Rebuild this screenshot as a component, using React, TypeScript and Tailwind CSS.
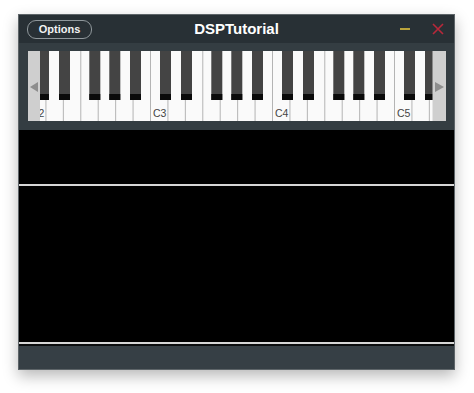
import React from 'react';

const WHITE_W = 122 / 7;
const BLACK_OFFSETS = [10, 31, 61.3, 81.3, 102];
const KB_W = 418;
const KB_H = 70;

const Keyboard = () => {
  const whites = Array.from({ length: 25 }, (_, i) => i);
  const octaves = [0, 1, 2, 3];
  return (
    <svg width={KB_W} height={KB_H} viewBox={`0 0 ${KB_W} ${KB_H}`} className="block">
      <rect x="0" y="0" width={KB_W} height={KB_H} fill="#fafafa" />
      {whites.map((i) => (
        <line
          key={i}
          x1={i * WHITE_W + 0.5}
          y1="0"
          x2={i * WHITE_W + 0.5}
          y2={KB_H}
          stroke="#b4b4b4"
          strokeWidth="1"
        />
      ))}
      {octaves.map((o) =>
        BLACK_OFFSETS.map((b) => {
          const x = o * 122 + b;
          return (
            <g key={`${o}-${b}`}>
              <rect x={x} y="0" width="11" height="49" fill="#444444" />
              <rect x={x} y="43" width="11" height="6" fill="#0a0a0a" />
            </g>
          );
        })
      )}
      {['C2', 'C3', 'C4', 'C5'].map((label, o) => (
        <text
          key={label}
          x={o * 122 + 3}
          y="66"
          fontSize="10.5"
          fill="#444"
          fontFamily="'Liberation Sans', Arial, sans-serif"
        >
          {label}
        </text>
      ))}
      <rect x="0" y="0" width="12" height={KB_H} fill="#cfcfcf" />
      <polygon points="2,36 10,31 10,41" fill="#8e8e8e" />
      <rect x="404.5" y="0" width="13.5" height={KB_H} fill="#cfcfcf" />
      <polygon points="416,36 407,31 407,41" fill="#8e8e8e" />
    </svg>
  );
};

const App = () => {
  return (
    <div className="w-[474px] h-[393px] bg-white pt-[14px] pl-[18px]" style={{ fontFamily: "'Liberation Sans', Arial, sans-serif" }}>
      <div className="w-[437px] h-[356px] flex flex-col border border-[#5d6468] bg-[#283035] shadow-[0_6px_14px_rgba(0,0,0,0.28)]">
        <div className="h-[28px] flex items-center justify-between px-[8px] relative">
          <button className="h-[19px] w-[65px] rounded-[9px] border border-[#8f979b] text-[11px] font-bold text-[#f2f2f2] leading-none">
            Options
          </button>
          <div className="absolute left-0 right-0 top-0 h-[28px] flex items-center justify-center text-[15px] font-bold text-white pointer-events-none">
            DSPTutorial
          </div>
          <div className="flex items-center gap-[22px] pr-[2px]">
            <div className="w-[10px] h-[2px] bg-[#b9a33c]" />
            <svg width="12" height="12" viewBox="0 0 12 12">
              <path d="M1 1 L11 11 M11 1 L1 11" stroke="#b8283a" strokeWidth="1.6" />
            </svg>
          </div>
        </div>
        <div className="h-[87px] bg-[#343d42] pt-[8px] pl-[9px]">
          <Keyboard />
        </div>
        <div className="h-[54px] bg-black" />
        <div className="h-[2px] bg-[#d6d6d6]" />
        <div className="h-[156px] bg-black" />
        <div className="h-[2px] bg-[#d6d6d6]" />
        <div className="h-[2px] bg-[#0b0d0e]" />
        <div className="flex-1 bg-[#363f45]" />
      </div>
    </div>
  );
};

export default App;
